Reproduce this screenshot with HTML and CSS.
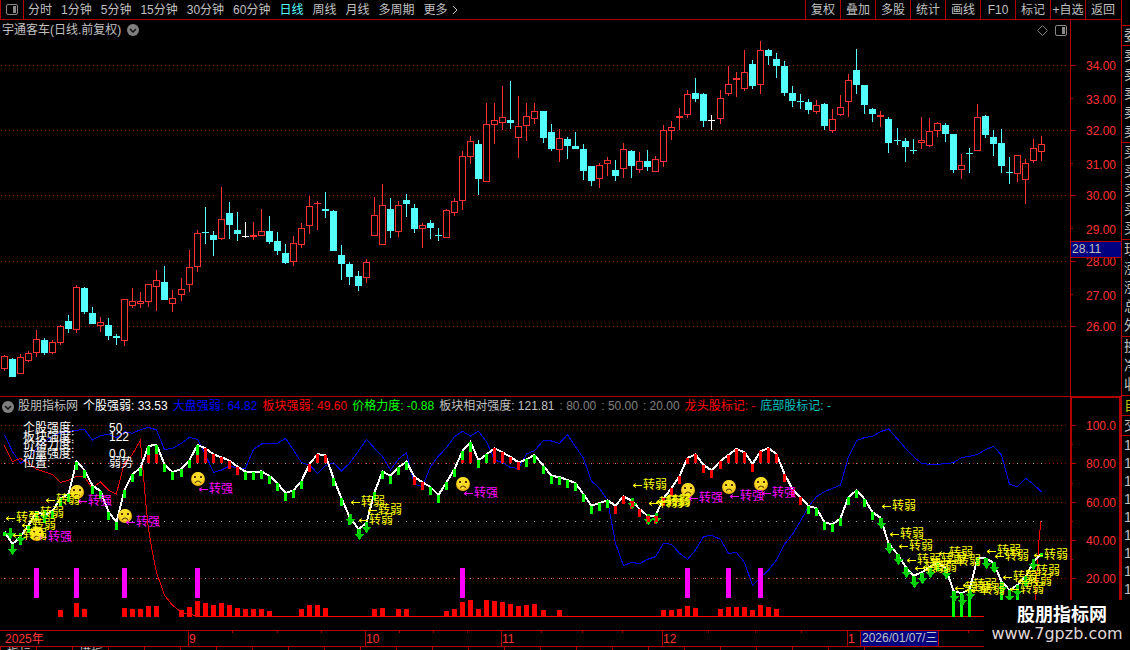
FILE: index.html
```html
<!DOCTYPE html>
<html lang="zh-CN">
<head>
<meta charset="utf-8">
<title>宇通客车 日线</title>
<link rel="stylesheet" href="styles.css">
</head>
<body>
<div class="terminal">
  <main class="workspace">
    <header class="toolbar">
      <button class="panel-toggle" aria-label="侧栏">
        <svg width="12" height="11" viewBox="0 0 12 11"><rect x="0.5" y="0.5" width="11" height="10" rx="1.5" fill="none" stroke="#888"/><rect x="7" y="2" width="3" height="7" fill="#888"/></svg>
      </button>
      <nav class="periods">
        <button>分时</button><button>1分钟</button><button>5分钟</button><button>15分钟</button><button>30分钟</button><button>60分钟</button><button class="active">日线</button><button>周线</button><button>月线</button><button>多周期</button><button class="more">更多<svg width="6" height="10" viewBox="0 0 6 10"><path d="M1 1l4 4-4 4" fill="none" stroke="#c0c0c0"/></svg></button>
      </nav>
      <div class="tools">
        <button>复权</button><button>叠加</button><button>多股</button><button>统计</button><button>画线</button><button>F10</button><button>标记</button><button>+自选</button><button>返回</button>
      </div>
    </header>
    <div class="pane-head">
      <div class="pane-title">
        <span>宇通客车(日线.前复权)</span>
        <svg class="chev" width="12" height="12" viewBox="0 0 12 12"><circle cx="6" cy="6" r="6" fill="#808080"/><path d="M3 5l3 3 3-3" fill="none" stroke="#111" stroke-width="1.5"/></svg>
        <svg class="diamond" width="11" height="11" viewBox="0 0 11 11"><path d="M5.5 .5l5 5-5 5-5-5z" fill="none" stroke="#808080"/></svg>
        <svg width="12" height="11" viewBox="0 0 12 11"><rect x="0.5" y="0.5" width="11" height="10" rx="1.5" fill="none" stroke="#888"/><rect x="7" y="2" width="3" height="7" fill="#888"/></svg>
      </div>
      <div class="axis-head"></div>
    </div>
    <svg class="chart" id="price" viewBox="0 40 1121 356" role="img" aria-label="日线K线图"></svg>
    <div class="pane-head lower">
      <div class="pane-title values">
        <svg class="chev" width="12" height="12" viewBox="0 0 12 12"><circle cx="6" cy="6" r="6" fill="#808080"/><path d="M3 5l3 3 3-3" fill="none" stroke="#111" stroke-width="1.5"/></svg>
        <span class="name">股朋指标网</span>
        <span class="white">个股强弱: 33.53</span>
        <span class="blue">大盘强弱: 64.82</span>
        <span class="red">板块强弱: 49.60</span>
        <span class="green">价格力度: -0.88</span>
        <span>板块相对强度: 121.81</span>
        <span class="dim">: 80.00</span>
        <span class="dim">: 50.00</span>
        <span class="dim">: 20.00</span>
        <span class="red">龙头股标记: -</span>
        <span class="teal">底部股标记: -</span>
      </div>
      <div class="axis-head"></div>
    </div>
    <svg class="chart" id="strength" viewBox="0 416 1121 230" role="img" aria-label="强弱指标图"></svg>
    <div class="tabs"><span>指标</span><span></span><span>模板</span><span></span><span></span><span></span><span></span><span></span><span></span><span></span><span></span><span></span><span></span><span></span><span></span><span></span><span></span><span></span><span></span><span></span><span></span><span></span><span></span><span></span><span></span></div>
  </main>
  <aside class="quotes">
    <div class="blank"></div>
    <div class="group head"><b>委</b></div>
    <div class="group"><b>卖</b><b>卖</b><b>卖</b><b>卖</b><b>卖</b></div>
    <div class="group"><b>买</b><b>买</b><b>买</b><b>买</b><b>买</b></div>
    <div class="group"><b>现</b><b>涨</b><b>涨</b><b>总</b><b>外</b></div>
    <div class="group"><b>换</b><b>净</b><b>收</b></div>
    <div class="group head yellow"><b>自</b></div>
    <div class="group head"><b>交</b></div>
    <div class="group ticks"><b>1</b><b>1</b><b>1</b><b>1</b><b>1</b><b>1</b><b>1</b><b>1</b><b>1</b></div>
  </aside>
  <div class="brand"><strong>股朋指标网</strong><span>www.7gpzb.com</span></div>
</div>
<script src="chart.js"></script>
</body>
</html>
```
FILE: styles.css
```css
* { box-sizing: border-box; }
body {
  margin: 0;
  background: #000;
  color: #c0c0c0;
  font: 12px/19px "Liberation Sans", "Noto Sans CJK SC", sans-serif;
}
button {
  padding: 0;
  border: 0;
  background: none;
  color: inherit;
  font: inherit;
  white-space: nowrap;
}
svg { display: block; flex: none; }
.terminal {
  position: relative;
  display: grid;
  grid-template-columns: 1fr 9px;
  height: 100vh;
  overflow: hidden;
}
.workspace { min-width: 0; display: flex; flex-direction: column; }
.toolbar {
  display: flex;
  flex: none;
  height: 20px;
  border-bottom: 1px solid #b00000;
}
.toolbar button { padding-top: 1px; }
.toolbar .panel-toggle {
  display: flex;
  align-items: center;
  justify-content: center;
  width: 24px;
  padding: 0;
  border: solid #b00000;
  border-width: 0 1px;
}
.periods { display: flex; gap: 9px; padding-left: 4px; }
.periods .active { color: #54ffff; }
.more { display: flex; align-items: center; gap: 4px; }
.tools { display: grid; grid-template-columns: repeat(9, 35px); margin-left: auto; margin-right: 1px; }
.tools button { border-left: 1px solid #b00000; }
.pane-head { display: flex; flex: none; height: 20px; }
.pane-title {
  flex: 1;
  display: flex;
  align-items: center;
  padding: 0 3px 0 2px;
  gap: 6px;
  white-space: nowrap;
}
.diamond { margin-left: auto; margin-right: 1px; }
.axis-head { width: 51px; border-left: 1px solid #b00000; }
.lower .pane-title { border-top: 1px solid #b00000; }
.lower .axis-head { border: 2px solid #b00000; border-bottom: 0; }
.lower .values { gap: 5px; }
.values .chev { margin-right: -1px; }
.white { color: #fff; }
.blue { color: #0000ff; }
.red { color: #ff0000; }
.green { color: #00ff00; }
.dim { color: #808080; }
.teal { color: #00c0c0; }
.chart { width: 100%; height: auto; }
.chart text { font-size: 12px; }
.crisp { shape-rendering: crispEdges; }
.tabs {
  display: flex;
  flex: none;
  height: 4px;
  overflow: hidden;
  border-top: 1px solid #b00000;
}
.tabs span { width: 36px; padding-left: 6px; border-left: 1px solid #b00000; line-height: 14px; }
.quotes {
  overflow: hidden;
  border-left: 1px solid #b00000;
  font-size: 14px;
}
.quotes b { display: block; height: 19px; padding-left: 2px; font-weight: 400; }
.blank { height: 25px; }
.group { padding-bottom: 1px; border-top: 1px solid #b00000; }
.group.head { padding-bottom: 0; }
.group.ticks b { height: 18px; }
.yellow { color: #c0c000; }
.brand {
  position: absolute;
  right: 0;
  bottom: 0;
  display: flex;
  flex-direction: column;
  align-items: center;
  width: 146px;
  height: 50px;
  padding-top: 5px;
  background: #000;
  color: #fff;
}
.brand strong { padding-left: 10px; font-size: 18px; line-height: 20px; }
.brand span { color: #e0d8d8; font: 16px/18px "DejaVu Sans", sans-serif; }
```
FILE: chart.js
```js
const RED = "#ff3232", CYAN = "#54ffff", FRAME = "#b00000";

// One row per day: x, high, body top, body bottom, low, kind (r rise, c fall, w flat)
const days = `4 355 356 369 371 r|12 358 359 377 377 c|20 354 357 374 374 r|28 351 353 361 362 r|36 330 339 353 357 r
44 338 340 353 355 c|52 340 342 353 354 r|60 325 326 343 345 r|68 315 321 329 333 c|76 285 287 330 333 r
84 287 288 312 314 c|92 307 313 324 324 c|100 317 322 326 332 r|108 318 325 336 340 c|116 334 336 338 345 c
124 299 299 341 346 r|132 288 301 306 308 r|140 292 301 304 308 r|148 284 284 302 307 r|156 270 280 287 311 r
164 266 282 300 300 c|172 290 298 304 312 r|181 278 289 295 301 r|189 250 267 285 292 r|197 230 233 267 272 r
205 207 232 233 244 c|213 231 235 240 256 c|221 187 219 239 240 r|229 202 213 225 239 c|237 212 230 234 241 c
245 222 236 237 238 w|253 222 235 237 240 r|261 209 231 236 236 r|269 216 231 242 244 c|277 232 241 251 255 c
285 244 253 263 264 c|293 236 243 262 266 r|301 223 228 245 248 r|309 196 206 226 234 r|317 201 203 204 230 r
325 192 209 211 218 c|333 210 211 251 251 c|341 245 255 264 280 c|349 262 264 277 285 c|358 271 276 286 291 c
366 259 262 278 283 r|374 197 215 236 236 r|382 184 205 245 245 r|390 198 209 231 238 c|398 201 205 232 237 r
406 194 200 204 217 c|414 204 208 229 233 c|422 223 225 229 248 r|430 220 223 228 239 c|438 228 235 236 241 c
446 209 210 238 238 r|454 198 201 213 216 r|462 151 156 201 210 r|470 136 141 157 164 r|478 140 144 179 195 c
486 103 124 182 182 r|494 103 120 125 144 r|502 86 117 123 130 r|510 81 120 123 129 c|518 96 126 138 158 r
526 103 116 126 141 r|534 103 111 119 124 r|543 111 111 138 143 c|551 124 132 149 151 c|559 129 138 150 162 r
567 137 139 146 159 c|575 132 146 149 149 c|583 144 149 171 180 c|591 166 166 181 186 c|599 163 165 179 188 r
607 157 160 164 176 r|615 160 170 176 181 c|623 143 149 169 178 r|631 150 151 166 178 c|639 152 161 170 173 r
647 150 161 167 171 c|655 156 159 172 172 r|663 125 130 162 167 r|671 121 127 131 140 r|679 108 116 118 130 r
687 90 94 115 118 r|695 78 93 99 102 c|703 93 94 121 127 c|711 115 120 121 130 w|720 90 98 119 124 r
728 66 84 94 96 r|736 72 78 80 97 r|744 50 72 89 91 r|752 60 64 86 89 c|760 41 50 85 94 r
768 49 50 56 65 c|776 53 59 66 78 c|784 61 66 93 96 c|792 86 93 101 107 c|800 94 101 102 109 c
808 99 102 110 114 c|816 100 105 112 114 r|824 103 104 126 130 c|832 109 119 131 133 r|840 95 107 115 116 r
848 74 80 102 117 r|856 49 70 85 94 c|864 85 85 105 114 c|872 108 109 114 122 c|880 111 115 117 127 r
888 117 119 143 153 c|897 128 140 141 145 c|905 138 141 147 162 c|913 139 150 151 154 c|921 117 140 143 149 r
929 118 131 146 147 r|937 122 123 131 137 r|945 123 125 134 142 c|953 134 134 170 173 c|961 154 165 170 179 r
969 148 153 154 173 c|977 104 117 151 151 r|985 115 116 135 138 c|993 130 137 144 156 c|1001 129 143 166 173 c
1009 157 172 173 184 c|1017 155 155 174 182 r|1025 159 163 180 204 r|1033 139 148 161 163 r|1041 136 144 152 161 r`
  .split(/[|\n]/).map(row => row.split(" ").map((v, i) => i < 5 ? +v : v));

const rect = (x, y, w, h, fill, extra = "") => `<rect x="${x}" y="${y}" width="${w}" height="${h}" fill="${fill}" ${extra}/>`;
const text = (x, y, s, fill, extra = "") => `<text x="${x}" y="${y}" fill="${fill}" ${extra}>${s}</text>`;
const dots = (x, y, color, step) => `<path d="M${x} ${y + 0.5}H1069" stroke="${color}" stroke-dasharray="1 ${step - 1}"/>`;
const numbers = s => s.split(" ").map(Number);

function candle([x, high, top, bottom, low, kind]) {
  const color = kind === "r" ? RED : kind === "c" ? CYAN : "#fff";
  const wicks = rect(x, high, 1, top - high, color) + rect(x, bottom, 1, low - bottom, color);
  if (kind === "r" && bottom - top > 2) {
    return wicks + rect(x - 2.5, top + 0.5, 6, bottom - top - 1, "#000", `stroke="${color}"`);
  }
  return wicks + rect(x - 3, top, 7, bottom - top, color);
}

// Price pane
let price = "";
[65, 130, 195, 261, 326].forEach(y => { price += dots(1, y, "#a00000", 4) + rect(1071, y, 5, 1, FRAME); });
[98, 163, 228, 294].forEach(y => { price += rect(1071, y, 2, 1, FRAME); });
price += rect(1070, 40, 1, 356, FRAME) + days.map(candle).join("");
price = `<g class="crisp">${price}</g>`;
[70, 104, 135, 169, 200, 234, 266, 300, 331].forEach((y, i) => {
  price += text(1116, y, (34 - i) + ".00", RED, 'text-anchor="end"');
});
price += rect(1071, 241, 50, 17, "#000080") + rect(1071, 241, 50, 1, FRAME) + rect(1071, 257, 50, 1, FRAME);
price += text(1072, 253, "28.11", "#c0c0c0");
document.getElementById("price").innerHTML = price;

// Strength pane: series are sampled once per day in thirds of a pixel below the pane top
const TOP = 395;
const xs = days.map(d => d[0]);
const py = v => TOP + v / 3;
const stock = numbers("410 447 425 390 350 360 348 310 297 200 225 272 288 350 382 285 238 218 153 149 208 231 222 195 150 160 178 187 197 215 230 232 229 243 265 294 286 258 207 178 180 250 310 365 403 383 292 229 243 217 200 246 262 276 300 262 222 168 141 196 178 160 172 186 202 193 180 213 243 246 255 264 298 332 324 316 332 304 317 342 362 362 310 280 243 189 178 210 226 198 180 162 172 207 169 159 178 237 282 307 333 340 382 388 370 306 286 312 352 368 445 478 515 542 533 516 503 518 588 595 583 490 490 503 560 585 570 545 500 475");
const market = numbers("120 170 205 190 160 140 122 115 110 106 103 135 122 118 128 110 115 104 97 105 164 160 145 127 133 180 232 225 213 219 219 163 147 145 145 130 165 203 210 235 212 203 228 205 168 133 160 185 225 192 173 268 275 215 183 158 125 109 123 109 140 195 203 218 220 177 167 136 138 145 119 155 190 258 280 315 445 512 502 506 493 485 445 448 475 493 465 425 421 433 475 473 502 572 548 525 495 448 418 378 335 305 290 280 270 185 137 128 124 110 102 132 160 185 205 208 208 206 203 188 184 178 164 154 180 268 275 250 268 291");
const sector = [[12,150],[37,200],[61,190],[85,205],[109,222],[133,230],[157,238],[181,262],[205,256],[229,244],[253,245],[277,280],[301,260],[325,285],[349,297],[373,205],[397,178],[421,137],[427,200],[436,310],[445,400],[457,470],[469,530],[493,600],[517,630],[544,652],[568,658],[604,664]];
const line = (pts, color, width) => `<polyline points="${pts.map(p => p.join(",")).join(" ")}" fill="none" stroke="${color}" stroke-width="${width}"/>`;
const series = (values, color, width) => line(values.map((v, i) => [xs[i] + 0.5, py(v)]), color, width);

let lower = "";
[425, 463, 502, 540, 578].forEach(y => { lower += dots(1, y, "#a00000", 4) + rect(1071, y, 5, 1, FRAME); });
[444, 483, 521, 559].forEach(y => { lower += rect(1071, y, 2, 1, FRAME); });
[463, 521, 578].forEach(y => xs.forEach(x => { lower += rect(x, y, 1, 1, "#a0a0a0"); }));
lower += rect(1070, 416, 2, 230, FRAME) + rect(1119, 416, 2, 230, FRAME);
lower += series(market, "#0000e8", 1) + line(sector.map(([x, v]) => [x / 3, py(v)]), "#e80000", 1);
lower += rect(200, 616, 870, 1, "#ff0000") + line([[1035, 600], [1037, 572], [1039, 540], [1041, 521]], "#ff0000", 1);

const volume = "60 610|76 603|84 609|124 608|132 609|140 609|148 606|156 606|181 610|189 607|197 601|205 603|213 605|221 603|229 605|237 608|245 609|253 609|261 609|269 611|301 609|309 605|317 605|325 608|374 609|382 608|398 609|406 609|446 611|454 609|462 602|470 600|478 609|486 600|494 601|502 602|510 604|518 606|526 605|534 604|543 610|559 610|663 610|671 610|679 609|687 606|695 608|720 609|728 607|736 607|744 607|752 610|760 605|768 607|776 609";
volume.split("|").map(numbers).forEach(([x, y]) => { lower += rect(x - 2, y, 5, 617 - y, "#ff0000"); });
[36, 76, 124, 197, 462, 687, 728, 760].forEach(x => { lower += rect(x - 2, 568, 5, 30, "#ff00ff"); });

lower += series(stock, "#fff", 2);
const isRed = n => (n >= 26 && n <= 30) || (n >= 39 && n <= 41) || n === 52 || n === 53 || (n >= 62 && n <= 65) || (n >= 77 && n <= 100);
const split = { 19: 180, 20: 178, 25: 180, 58: 195, 59: 172 };
stock.forEach((v, i) => {
  const n = i + 1;
  const long = (n >= 119 && n <= 121) || (n >= 125 && n <= 127);
  const top = Math.round(py(v));
  const end = long ? 617 : n === 1 || n >= 129 ? top + 4 : Math.round(py(v < 190 ? Math.max(205, v + 18) : v + 24));
  lower += rect(xs[i] - 1, top, 3, end - top, isRed(n) ? "#ff0000" : "#00ff00");
  if (split[n]) lower += rect(xs[i] - 1, Math.round(py(split[n])), 3, 463 - Math.round(py(split[n])), "#ff0000");
});

// Down arrows, placed by the tip
[[10,539],[12,555],[20,544],[44,521],[350,525],[359,540],[366,533],[632,509],[648,525],[656,524],[881,529],[889,554],[898,565],[906,578],[914,588],[922,584],[930,578],[946,579],[954,602],[962,606],[970,600],[986,569],[994,573],[1002,593],[1009,602],[1017,597],[1025,587],[1033,570]].forEach(([x, y]) => {
  lower += `<path d="M${x - 1} ${y - 11}h3v5h3l-4.5 6-4.5-6h3z" fill="#00d000"/>`;
});
[632, 648, 656].forEach(x => { lower += rect(x - 1, x === 632 ? 501 : 516, 3, 6, "#ff0000"); });
lower = `<g class="crisp">${lower}</g>`;

// Sad faces mark a turn to strength
[[77,492],[125,516],[37,534],[198,479],[463,484],[688,490],[729,487],[761,484]].forEach(([x, y]) => {
  lower += `<g transform="translate(${x} ${y})"><circle r="7" fill="#f0b818"/><circle cy="-1" r="6" fill="#f8dc28"/><rect x="-4" y="-3" width="2" height="2" fill="#503000"/><rect x="2" y="-3" width="2" height="2" fill="#503000"/><path d="M-3 4q3-4 6 0" fill="none" stroke="#604000" stroke-width="1.2"/></g>`;
});
const mark = (x, y, word, color) => `<path d="M${x + 10} ${y + 1.5}H${x + 1}m3-2l-3 2 3 2" fill="none" stroke="${color}"/>` + text(x + 11, y + 5, word, color);
[[77,500],[125,521],[37,536],[198,488],[463,492],[688,497],[729,495],[761,492]].forEach(([x, y]) => { lower += mark(x, y, "转强", "#ff00ff"); });
[[45,499],[5,517],[29,512],[21,524],[12,534],[350,501],[367,509],[358,519],[632,484],[648,502],[655,501],[656,500],[881,505],[889,533],[898,545],[906,559],[914,567],[922,566],[930,558],[938,552],[946,560],[954,587],[962,584],[970,589],[986,550],[994,555],[1002,576],[1009,588],[1017,580],[1025,570],[1033,554]].forEach(([x, y]) => { lower += mark(x, y, "转弱", "#ffff00"); });

[["个股强度:", 432, "50"], ["板块强度:", 441, "122"], ["价格力度:", 449, ""], ["动量强度:", 458, "0.0"], ["位置:", 467, "弱势"]].forEach(([label, y, value]) => {
  lower += text(23, y, label, "#fff") + text(109, y, value, "#fff");
});
["100.0", "80.00", "60.00", "40.00", "20.00"].forEach((label, i) => {
  lower += text(1116, [430, 468, 507, 545, 583][i], label, RED, 'text-anchor="end"');
});

// Date axis
let axis = rect(0, 630, 1070, 1, FRAME);
[232, 277, 321, 399, 433, 467, 541, 582, 622, 708, 755, 801, 968].forEach(x => { axis += rect(x, 631, 1, 2, FRAME); });
[[5, "2025年"], [189, "9"], [366, "10"], [502, "11"], [663, "12"], [848, "1"]].forEach(([x, label]) => {
  if (x > 5) axis += rect(x - 1, 631, 1, 15, FRAME);
  axis += text(x, 643, label, RED);
});
axis += rect(860.5, 630.5, 78, 16, "#000080", `stroke="${FRAME}"`) + text(862, 642, "2026/01/07/三", "#c0c0c0");
document.getElementById("strength").innerHTML = lower + axis;
```
